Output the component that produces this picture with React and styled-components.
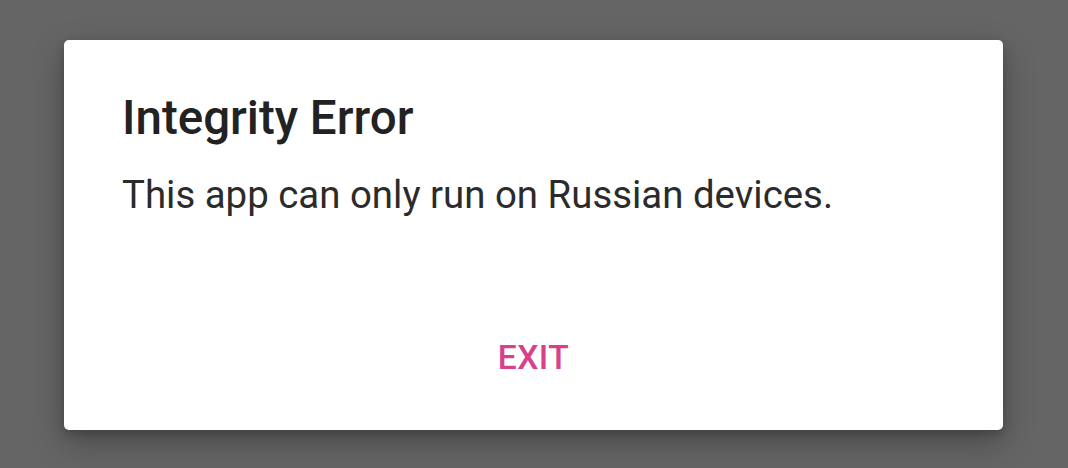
import React from "react";
import styled, { createGlobalStyle } from "styled-components";

const Global = createGlobalStyle`
  html, body {
    margin: 0;
    padding: 0;
    background: #656565;
  }
  * { box-sizing: border-box; }
`;

const Scrim = styled.div`
  width: 1068px;
  height: 468px;
  background: #656565;
  padding: 40px 0 0 64px;
  font-family: Roboto, "Noto Sans", sans-serif;
`;

const Dialog = styled.div`
  width: 939px;
  height: 390px;
  background: #ffffff;
  border-radius: 5px;
  box-shadow: 0 12px 32px rgba(0, 0, 0, 0.28), 0 4px 10px rgba(0, 0, 0, 0.18);
  padding: 50px 58px 0 58px;
  display: flex;
  flex-direction: column;
`;

const Title = styled.h2`
  margin: 0;
  font-size: 47.5px;
  line-height: 56px;
  font-weight: 500;
  color: #222222;
`;

const Message = styled.p`
  margin: 26px 0 0;
  font-size: 38.4px;
  line-height: 45px;
  font-weight: 400;
  color: #2b2b2b;
`;

const Actions = styled.div`
  display: flex;
  justify-content: center;
  margin-top: 121px;
`;

const TextButton = styled.button`
  background: none;
  border: none;
  padding: 0;
  font-family: inherit;
  font-size: 33.6px;
  line-height: 40px;
  font-weight: 500;
  letter-spacing: 0.5px;
  color: ${(p) => p.$color};
  text-transform: uppercase;
  cursor: pointer;
`;

export default function App() {
  return (
    <>
      <Global />
      <Scrim>
        <Dialog role="alertdialog">
          <Title>Integrity Error</Title>
          <Message>This app can only run on Russian devices.</Message>
          <Actions>
            <TextButton $color="#d8408b">Exit</TextButton>
          </Actions>
        </Dialog>
      </Scrim>
    </>
  );
}
